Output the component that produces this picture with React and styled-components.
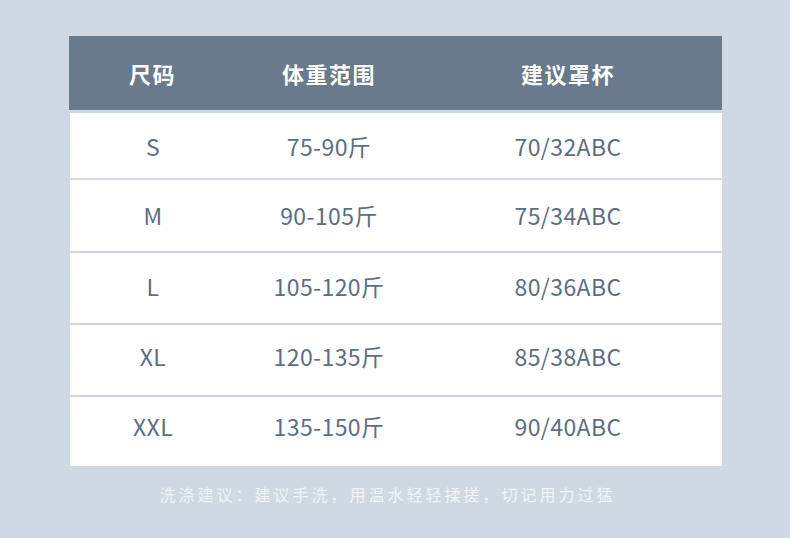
import React from 'react';
import styled, { createGlobalStyle } from 'styled-components';

const rows = [
  { size: 'S', weight: '75-90斤', cup: '70/32ABC', h: 65, lift: 0 },
  { size: 'M', weight: '90-105斤', cup: '75/34ABC', h: 71, lift: 2 },
  { size: 'L', weight: '105-120斤', cup: '80/36ABC', h: 70, lift: 4 },
  { size: 'XL', weight: '120-135斤', cup: '85/38ABC', h: 70, lift: 8 },
  { size: 'XXL', weight: '135-150斤', cup: '90/40ABC', h: 69, lift: 11 },
];

const App = () => {
  return (
    <Page>
      <GlobalStyle />
      <Table>
        <Header>
          <HeadCell>尺码</HeadCell>
          <HeadCell>体重范围</HeadCell>
          <HeadCell>建议罩杯</HeadCell>
        </Header>
        <Body>
          {rows.map((row) => (
            <Row key={row.size} $h={row.h} $lift={row.lift}>
              <Cell>{row.size}</Cell>
              <Cell>{row.weight}</Cell>
              <Cell>{row.cup}</Cell>
            </Row>
          ))}
        </Body>
      </Table>
      <Note>洗涤建议：建议手洗，用温水轻轻揉搓，切记用力过猛</Note>
    </Page>
  );
};

export default App;

const GlobalStyle = createGlobalStyle`
  html, body {
    margin: 0;
    padding: 0;
    background: #cfd9e3;
  }
  body {
    font-family: "Noto Sans CJK SC", "Noto Sans", sans-serif;
  }
`;

const Page = styled.div`
  width: 790px;
  height: 538px;
  box-sizing: border-box;
  padding: 36px 68px 0 69px;
  background: #cfd9e3;
`;

const Table = styled.div`
  display: flex;
  flex-direction: column;
`;

const Header = styled.div`
  display: grid;
  grid-template-columns: 167px 186px 1fr;
  padding-right: 8px;
  height: 74px;
  align-items: center;
  background: #687a8c;
`;

const HeadCell = styled.div`
  text-align: center;
  color: #ffffff;
  font-size: 22px;
  font-weight: 700;
  letter-spacing: 1.5px;
`;

const Body = styled.div`
  display: flex;
  flex-direction: column;
  gap: 2px;
  margin: 3px 0 0 1px;
`;

const Row = styled.div`
  display: grid;
  grid-template-columns: 166px 186px 1fr;
  box-sizing: border-box;
  padding: 0 8px ${(p) => p.$lift}px 0;
  height: ${(p) => p.$h}px;
  align-items: center;
  background: #ffffff;
`;

const Cell = styled.div`
  text-align: center;
  color: #5e6e80;
  font-size: 23px;
  font-weight: 400;
  letter-spacing: 0.4px;
`;

const Note = styled.div`
  margin-top: 16px;
  padding-right: 16px;
  text-align: center;
  color: #f0f4f7;
  font-size: 16px;
  letter-spacing: 3px;
`;
